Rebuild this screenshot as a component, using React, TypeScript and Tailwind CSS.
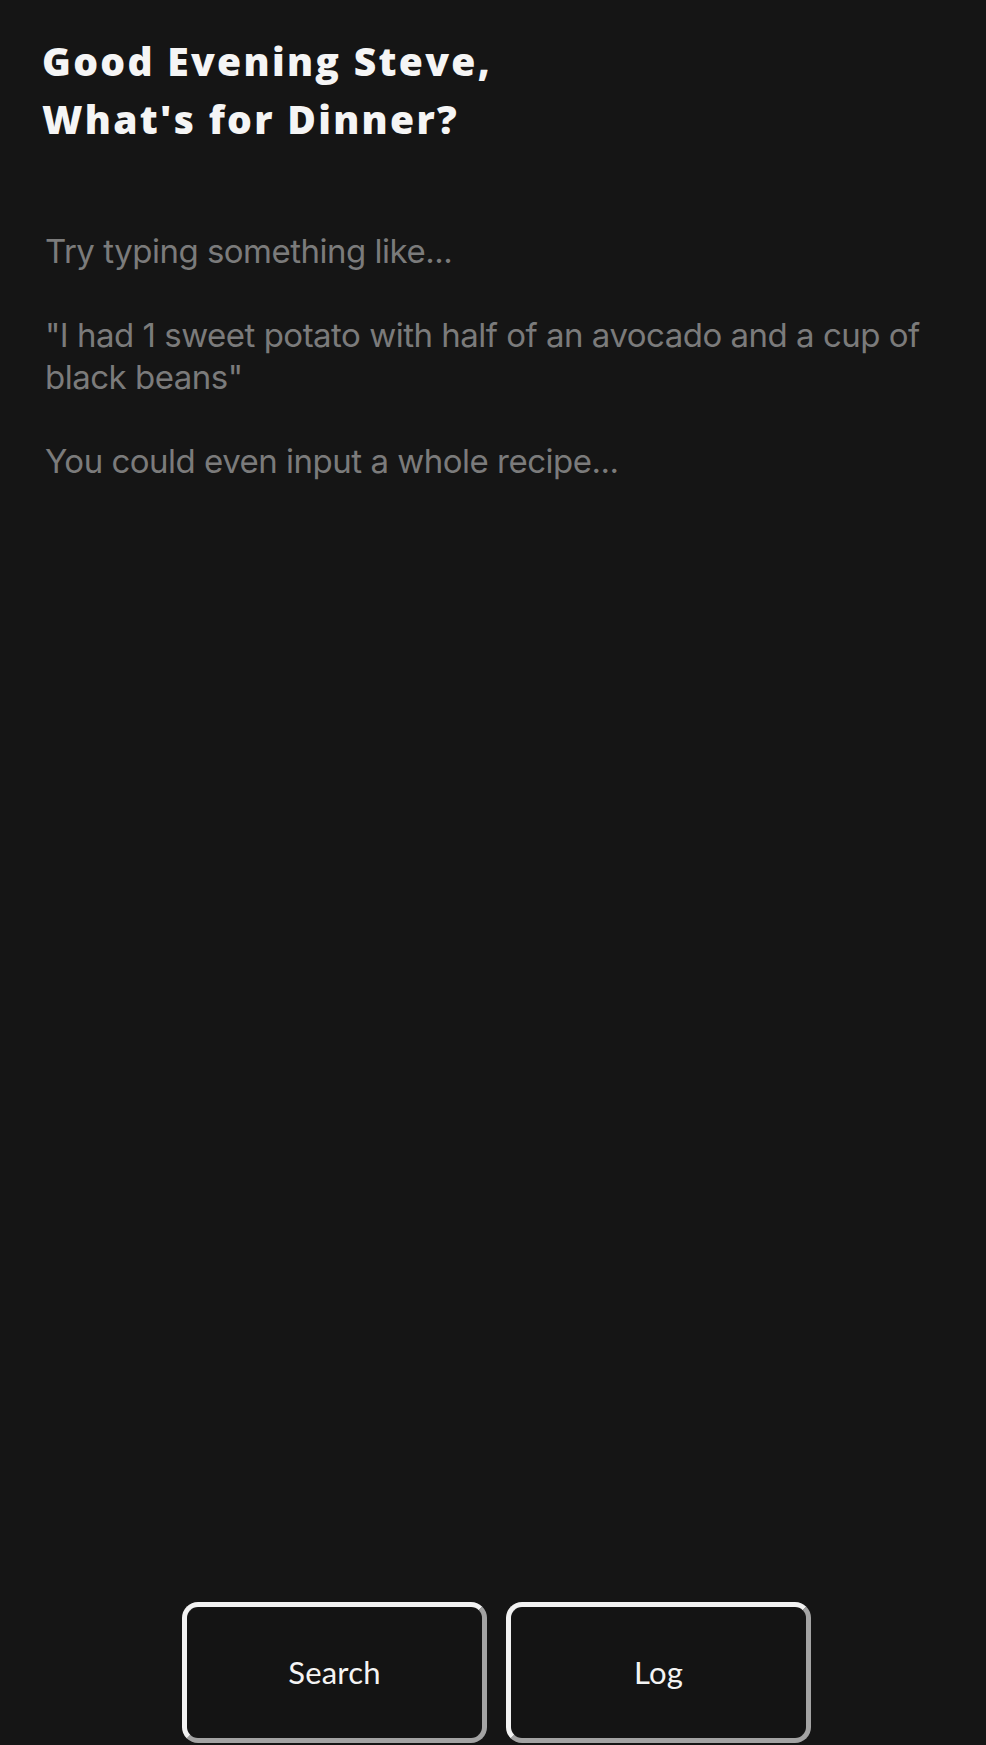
import { useState } from "react";

const placeholder = `Try typing something like...

"I had 1 sweet potato with half of an avocado and a cup of black beans"

You could even input a whole recipe...`;

function ActionButton({ label }: { label: string }) {
  return (
    <button
      type="button"
      className="w-[305px] h-[141px] rounded-[16px] border-[5px] border-t-[#f2f2f2] border-l-[#f2f2f2] border-b-[#a3a3a3] border-r-[#a3a3a3] bg-[#141414] text-[#f4f4f4] text-[31px] font-['Lato',sans-serif] tracking-[0.2px]"
    >
      {label}
    </button>
  );
}

export default function App() {
  const [text, setText] = useState("");

  return (
    <div className="min-h-screen h-[1745px] bg-[#151515] flex flex-col font-['Lato',sans-serif]">
      <h1 className="pt-[32px] px-[42px] text-[39px] leading-[58px] font-extrabold text-[#f5f5f5] tracking-[2.3px] font-['Open_Sans',sans-serif]">
        Good Evening Steve,
        <br />
        What's for Dinner?
      </h1>

      <textarea
        value={text}
        onChange={(e) => setText(e.target.value)}
        placeholder={placeholder}
        className="flex-1 mt-[82px] mx-[45px] resize-none bg-transparent outline-none text-[33px] leading-[42px] text-[#e8e8e8] placeholder:text-[#7b7b7b] font-['Inter',sans-serif] tracking-[-0.5px]"
      />

      <div className="flex justify-center gap-[19px] pl-[7px] pb-[2px]">
        <ActionButton label="Search" />
        <ActionButton label="Log" />
      </div>
    </div>
  );
}
